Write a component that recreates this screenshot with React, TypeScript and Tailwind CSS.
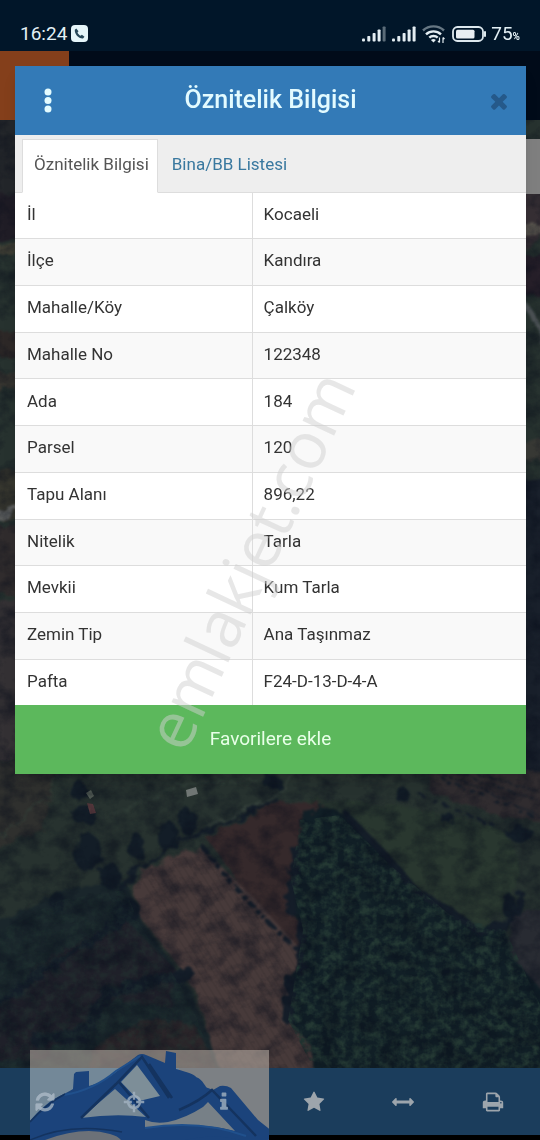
import { useState } from "react";

const attributes = [
  { label: "İl", value: "Kocaeli" },
  { label: "İlçe", value: "Kandıra" },
  { label: "Mahalle/Köy", value: "Çalköy" },
  { label: "Mahalle No", value: "122348" },
  { label: "Ada", value: "184" },
  { label: "Parsel", value: "120" },
  { label: "Tapu Alanı", value: "896,22" },
  { label: "Nitelik", value: "Tarla" },
  { label: "Mevkii", value: "Kum Tarla" },
  { label: "Zemin Tip", value: "Ana Taşınmaz" },
  { label: "Pafta", value: "F24-D-13-D-4-A" },
];

const icons = {
  refresh:
    "M1639 1056q0 5-1 7-64 268-268 434.5t-478 166.5q-146 0-282.5-55t-243.5-157l-129 129q-19 19-45 19t-45-19-19-45v-448q0-26 19-45t45-19h448q26 0 45 19t19 45-19 45l-137 137q71 66 161 102t187 36q134 0 250-65t186-179q11-17 53-117 8-23 30-23h192q13 0 22.5 9.5t9.5 22.5zm25-800v448q0 26-19 45t-45 19h-448q-26 0-45-19t-19-45 19-45l138-138q-148-137-349-137-134 0-250 65t-186 179q-11 17-53 117-8 23-30 23h-199q-13 0-22.5-9.5t-9.5-22.5v-7q65-268 270-434.5t480-166.5q146 0 284 55.5t245 156.5l130-129q19-19 45-19t45 19 19 45z",
  locate:
    "M800 64h192v260a580 580 0 0 1 476 476h260v192h-260a580 580 0 0 1-476 476v260h-192v-260a580 580 0 0 1-476-476h-260v-192h260a580 580 0 0 1 476-476zM800 520a390 390 0 0 0-280 280h200v192h-200a390 390 0 0 0 280 280v-200h192v200a390 390 0 0 0 280-280h-200v-192h200a390 390 0 0 0-280-280v200h-192z",
  info: "M1216 1344v128q0 26-19 45t-45 19h-512q-26 0-45-19t-19-45v-128q0-26 19-45t45-19h64v-384h-64q-26 0-45-19t-19-45v-128q0-26 19-45t45-19h384q26 0 45 19t19 45v576h64q26 0 45 19t19 45zm-128-1152v192q0 26-19 45t-45 19h-256q-26 0-45-19t-19-45v-192q0-26 19-45t45-19h256q26 0 45 19t19 45z",
  star: "M1728 647q0 22-26 48l-363 354 86 500q1 7 1 20 0 21-10.5 35.5t-30.5 14.5q-19 0-40-12l-449-236-449 236q-22 12-40 12-21 0-31.5-14.5t-10.5-35.5q0-6 2-20l86-500-364-354q-25-27-25-48 0-37 56-46l502-73 225-455q19-41 49-41t49 41l225 455 502 73q56 9 56 46z",
  measure:
    "M1792 896q0 26-19 45l-256 256q-19 19-45 19t-45-19-19-45v-128h-1024v128q0 26-19 45t-45 19-45-19l-256-256q-19-19-19-45t19-45l256-256q19-19 45-19t45 19 19 45v128h1024v-128q0-26 19-45t45-19 45 19l256 256q19 19 19 45z",
  print:
    "M448 1536h896v-256h-896v256zm0-640h896v-384h-160q-40 0-68-28t-28-68v-160h-640v640zm1152 64q0-26-19-45t-45-19-45 19-19 45 19 45 45 19 45-19 19-45zm128 0v416q0 13-9.5 22.5t-22.5 9.5h-224v160q0 40-28 68t-68 28h-960q-40 0-68-28t-28-68v-160h-224q-13 0-22.5-9.5t-9.5-22.5v-416q0-79 56.5-135.5t135.5-56.5h64v-544q0-40 28-68t68-28h672q40 0 88 20t76 48l152 152q28 28 48 76t20 88v256h64q79 0 135.5 56.5t56.5 135.5z",
  close:
    "M1490 1322q0 40-28 68l-136 136q-28 28-68 28t-68-28l-294-294-294 294q-28 28-68 28t-68-28l-136-136q-28-28-28-68t28-68l294-294-294-294q-28-28-28-68t28-68l136-136q28-28 68-28t68 28l294 294 294-294q28-28 68-28t68 28l136 136q28 28 28 68t-28 68l-294 294 294 294q28 28 28 68z",
};

const tools: { name: string; icon: keyof typeof icons }[] = [
  { name: "Yenile", icon: "refresh" },
  { name: "Konum", icon: "locate" },
  { name: "Bilgi", icon: "info" },
  { name: "Favoriler", icon: "star" },
  { name: "Ölçüm", icon: "measure" },
  { name: "Yazdır", icon: "print" },
];

function Icon({ name, className }: { name: keyof typeof icons; className?: string }) {
  return (
    <svg viewBox="0 0 1792 1792" fill="currentColor" fillRule="evenodd" aria-hidden="true" className={className}>
      <path d={icons[name]} />
    </svg>
  );
}

function Signal({ full }: { full?: boolean }) {
  return (
    <svg viewBox="0 0 24 16" fill="#e3edf2" aria-hidden="true" className="h-4 w-6">
      <rect x="0" y="12.500" width="3" height="3" rx="1" />
      <rect x="5.300" y="10" width="3" height="5.500" rx="0.800" />
      <rect x="10.600" y="7" width="3" height="8.500" rx="0.800" />
      <rect x="15.600" y="3.500" width="3" height="12" rx="0.800" />
      <rect x="20.600" y="0.500" width="3" height="15" rx="0.800" opacity={full ? 1 : 0.4} />
    </svg>
  );
}

function StatusBar() {
  return (
    <header className="flex h-[51px] items-center justify-between bg-[#011629] pt-4 pr-5 pl-5 text-[#e3f0f5]">
      <div className="flex items-center gap-1">
        <span className="text-[19px] leading-none">16:24</span>
        <svg viewBox="0 0 17 17" aria-hidden="true" className="size-[17px]">
          <rect width="17" height="17" rx="4" fill="#e6f6fa" />
          <path
            d="M5.300 3.500 3.800 4.800C3.300 9 7.600 13.800 12 13.500l1.500-1.700-2.600-2-1.400 1C8.200 10.200 6.900 8.900 6.500 7.600l1-1.300z"
            fill="#27485a"
          />
        </svg>
      </div>
      <div className="flex items-center gap-1.5">
        <Signal />
        <Signal full />
        <svg viewBox="0 0 24 18" fill="none" stroke="#e3edf2" strokeWidth="2.400" aria-hidden="true" className="h-[18px] w-6">
          <path d="M1 5.500a15.500 15.500 0 0 1 21 0" opacity="0.450" />
          <path d="M4 9.300a11 11 0 0 1 15 0" />
          <path d="M7.300 12.700a6 6 0 0 1 8.400 0" />
          <path d="m11.500 17.500-2.600-2.600q2.600-2 5 0z" fill="#e3edf2" stroke="none" />
          <path d="M17.500 12.500v5M16 16l1.500 1.500M21 18v-5.500M22.500 14 21 12.500" strokeWidth="1.200" />
        </svg>
        <div className="flex items-center gap-1">
          <svg viewBox="0 0 35 16" aria-hidden="true" className="h-4 w-[35px]">
            <rect x="1" y="1" width="30" height="14" rx="4.500" fill="none" stroke="#dde8ee" strokeWidth="1.800" />
            <rect x="4" y="3.700" width="18.500" height="8.800" rx="1.500" fill="#e8eef2" />
            <path d="M33 6v4" stroke="#dde8ee" strokeWidth="2" strokeLinecap="round" />
          </svg>
          <span className="text-[19px] leading-none">
            75<span className="text-[10px] font-bold">%</span>
          </span>
        </div>
      </div>
    </header>
  );
}

function SatelliteMap() {
  return (
    <svg
      viewBox="0 0 540 1140"
      preserveAspectRatio="xMidYMid slice"
      colorInterpolationFilters="sRGB"
      aria-hidden="true"
      className="absolute inset-0 -z-10 h-full w-full"
    >
      <defs>
        <filter id="grain" x="0" y="0" width="100%" height="100%">
          <feTurbulence type="fractalNoise" baseFrequency="0.050 0.060" numOctaves="5" seed="8" />
          <feColorMatrix values="0 0 0 0 0.030  0 0 0 0 0.050  0 0 0 0 0.100  2.200 0 0 0 -0.850" />
        </filter>
        <filter id="canopy" x="0" y="0" width="100%" height="100%">
          <feTurbulence type="fractalNoise" baseFrequency="0.130" numOctaves="3" seed="3" />
          <feColorMatrix values="0 0 0 0 0.140  0 0 0 0 0.220  0 0 0 0 0.200  0 2.600 0 0 -0.950" />
          <feComposite in2="SourceGraphic" operator="in" />
          <feGaussianBlur stdDeviation="0.600" />
        </filter>
        <filter id="rough" x="-5%" y="-5%" width="110%" height="110%">
          <feTurbulence type="fractalNoise" baseFrequency="0.080" numOctaves="3" seed="5" />
          <feDisplacementMap in="SourceGraphic" scale="12" />
          <feGaussianBlur stdDeviation="0.900" />
        </filter>
        <pattern id="furrows" width="6" height="6" patternUnits="userSpaceOnUse" patternTransform="rotate(-32)">
          <path d="M2 0v6" stroke="#2c2528" strokeWidth="1.500" opacity="0.220" />
        </pattern>
      </defs>
      <rect width="540" height="1140" fill="#27322f" />

      {/* strips beside the dialog */}
      <g filter="url(#rough)">
        <path d="M-9 110h32v70l-12 60H-9z" fill="#23262a" />
        <path d="M-9 195h34v45H-9z" fill="#201d26" />
        <path d="M-9 245h34v7H-9z" fill="#454438" />
        <path d="M-9 333h34v25H-9z" fill="#2d2827" />
        <path d="M-9 372h34v17H-9z" fill="#3b3932" />
        <path d="M-9 470h34v48H-9z" fill="#36362e" />
        <path d="M-9 525h34v70H-9z" fill="#302c2d" />
        <path d="m-9 517 34-14" stroke="#5b5d5d" strokeWidth="7" />
        <path d="M518 190h32v40l-25 20z" fill="#362f34" />
        <path d="M520 225h30v10h-30z" fill="#56524c" />
        <path d="M520 255h30v40h-30z" fill="#261f29" />
        <path d="M520 300q20 20 28 50" stroke="#4b5154" strokeWidth="6" fill="none" />
        <path d="M518 440h32v20h-32z" fill="#383935" />
        <path d="M518 480h32v310h-32z" fill="#19202b" />
        <path d="M-9 600h34v160H-9z" fill="#343134" />
      </g>

      <g filter="url(#rough)">
        <path d="M-9 760h70L42 830-9 850z" fill="#2f302e" />
        <path d="M430 770h130v55l-60-8-70-25z" fill="#302c2f" />
        <path d="M303 800q90-3 205 32l12 35-8 35-32 28-42-12-70-75-50-35z" fill="#29372f" />
        <path d="m512 910 38 0v105l-50-40z" fill="#282b32" />
        <path d="M-9 925 60 890l65-10 20 45 45 65 35 85H-9z" fill="#1a262b" />
        <path d="m-9 1010 70-60 65-30 50 50-5 35-60-5-50 45-30 15H-9z" fill="#1f2029" />
        <path d="m100 1040 50-20 45 5 20 40-5 20H85z" fill="#2a2529" />
        <path
          d="m300 815 20-9 23 6 47 48 25 32 25 13 30 20h30l15 35 40 45v75H318l-8-35-24-27v-41l17-25 2-24-18-20 9-52z"
          fill="#111f26"
        />
        <path d="m207 838 68-36 48 2-22 13-5 39-9 52 18 20-2 23-50-48z" fill="#35292b" />
        <path
          d="m131 884 15-14 40-20 17-1 50 48 50 55-3 18-14 7v41l24 27 8 40H225l-10-30-19-61-14-24-41-52z"
          fill="#473a3a"
        />
      </g>
      <path d="m140 880 45-25 20 2 95 97-3 16-14 8v40l24 27 6 35h-85l-34-115z" fill="url(#furrows)" />

      <g filter="url(#rough)" fill="none" stroke="#141d28" strokeLinecap="round">
        <path d="m120 890 15-18 25-15 20-18 25-5 40-20 32-13" strokeWidth="4" />
        <path d="m205 850 30 37 25 27 22 22 20 17" strokeWidth="5" strokeDasharray="2 8" />
        <path d="m343 812 47 48 27 32 35 20 30 22 28-14 12-25" strokeWidth="7" />
        <path d="m445 780 55 22 40 18M420 795l48 20 45 20" strokeWidth="3" strokeDasharray="4 9" />
        <path d="m440 774 26 8 74 34M455 772l85 29M475 772l65 20" strokeWidth="1.500" strokeDasharray="2 3" />
        <path d="M-5 1005 60 960l40-25 30-20" strokeWidth="7" />
        <path d="m35 1040 50-5 20-40 50-15 35-5" strokeWidth="12" />
        <path d="m290 980-1 40M302 925l-1 45M297 850l-7 60" strokeWidth="10" />
        <path d="m0 835 50-38 10-30M100 820l80-35 80-5" stroke="#33413a" strokeWidth="1.500" />
        <path d="m303 770-35 30-60 25" stroke="#3b4740" strokeWidth="2" />
      </g>
      <g filter="url(#rough)" fill="#131d27">
        <ellipse cx="78" cy="790" rx="9" ry="9" />
        <ellipse cx="84" cy="815" rx="12" ry="9" />
        <ellipse cx="88" cy="853" rx="14" ry="19" />
        <ellipse cx="135" cy="845" rx="9" ry="12" />
        <ellipse cx="168" cy="836" rx="10" ry="15" />
        <ellipse cx="188" cy="822" rx="9" ry="13" />
        <ellipse cx="110" cy="876" rx="10" ry="14" />
        <ellipse cx="57" cy="902" rx="8" ry="11" />
        <ellipse cx="125" cy="910" rx="15" ry="12" />
        <ellipse cx="272" cy="782" rx="10" ry="7" />
        <ellipse cx="402" cy="795" rx="7" ry="8" />
        <ellipse cx="447" cy="818" rx="7" ry="6" />
        <ellipse cx="520" cy="834" rx="14" ry="8" />
        <ellipse cx="508" cy="905" rx="7" ry="12" />
      </g>
      <path d="m186 790 10-3 2 7-11 3z" fill="#717775" />
      <path d="m86 793 5-3 3 6-4 3z" fill="#6b7568" />
      <path d="m87 803 6 1 3 9-6 1z" fill="#54373b" />
      <g filter="url(#canopy)">
        <path d="m300 820 40-5 50 50 60 50 55 15 35 75v75H320l-32-60 15-90-12-50z" />
        <path d="M0 930 60 900l65-10 15 35 50 75 25 68H0z" opacity="0.400" />
      </g>
      <rect width="540" height="1140" filter="url(#grain)" opacity="0.500" />
    </svg>
  );
}

function HouseLogo() {
  return (
    <svg viewBox="0 0 239 90" role="img" aria-label="Logo" className="absolute bottom-0 left-[30px] h-[90px] w-[239px]">
      <rect width="239" height="90" fill="#b9aea6" opacity="0.580" />
      <path d="M0 18h149v67H0z" fill="#6ca0c4" opacity="0.300" />
      <path d="M149 18h90v67h-90z" fill="#8c8580" opacity="0.300" />
      <path
        d="M0 71C8 61 21 49 34 44q6-3 9-5l1-15 2-2 13-1v15q12-3 23-11L108 5q4-2 8 0l19 8 1-12 10 2v16q19 5 20 8c8 3 9 11 12 11l5 2 7-4q6-1 11 2l27 32 20 16-10 4H0z"
        fill="#1b437b"
      />
      <path d="M51 68 85 39l31 28q-30-4-65 1z" fill="#778894" />
      <path d="m91 32 16-17 23 31-21 5z" fill="#7d8e98" />
      <path d="M115 78v-8q10 4 23 2 18-4 35-15l5-5 27 29q-40-10-90-3z" fill="#778087" />
      <path d="M15 90q38-14 65-6 8 2 11 6z" fill="#6c7178" />
      <path d="M155 90q30-7 55 0z" fill="#1b437b" />
      <path d="M51 68 86 34 112 7l27 41M89 32l30 36M119 14l23 34M149 60q21-9 33-20l44 46" fill="none" stroke="#14335f" strokeWidth="2.500" />
      <path d="M34 45q30-5 52-24l24-15M115 78q55-9 101 8" fill="none" stroke="#20508c" strokeWidth="2" />
      <path d="M0 72q16-18 35-28M0 90q40-18 92-8" fill="none" stroke="#14335f" strokeWidth="1.500" />
    </svg>
  );
}

function AttributeDialog() {
  const [tab, setTab] = useState(0);

  return (
    <section role="dialog" aria-labelledby="dialog-title" className="relative shadow-lg">
      <div className="flex h-[69px] items-center justify-between bg-[#337ab7] px-[9px] text-[#e3fbff]">
        <button aria-label="Menü" className="flex h-9 w-12 items-center justify-center">
          <svg viewBox="0 0 8 26" fill="currentColor" aria-hidden="true" className="h-[26px] w-2">
            <circle cx="4" cy="4" r="3.500" />
            <circle cx="4" cy="12.500" r="3.500" />
            <circle cx="4" cy="21" r="3.500" />
          </svg>
        </button>
        <h1 id="dialog-title" className="pb-0.5 text-[25px] leading-8 font-medium">
          Öznitelik Bilgisi
        </h1>
        <button aria-label="Kapat" className="flex h-9 w-12 items-center justify-end pr-1.5 text-[#25598a]">
          <Icon name="close" className="size-6" />
        </button>
      </div>

      <div role="tablist" className="flex h-[58px] items-end gap-0.5 border-b border-[#dddddd] bg-[#eeeeee] px-[7px] text-[17px]">
        {["Öznitelik Bilgisi", "Bina/BB Listesi"].map((name, index) => (
          <button
            key={name}
            role="tab"
            aria-selected={tab === index}
            onClick={() => setTab(index)}
            className={`-mb-px h-[54px] border pr-2 pb-0.5 pl-[11px] ${
              tab === index
                ? "border-[#dddddd] border-b-white bg-white text-[#555555]"
                : "border-transparent text-[#39789f]"
            }`}
          >
            {name}
          </button>
        ))}
      </div>

      <table className="h-[512px] w-full table-fixed border-collapse bg-white text-left text-[17px] text-[#333333]">
        <tbody>
          {attributes.map((item) => (
            <tr key={item.label} className="border-b border-[#dddddd] last:border-b-0 even:bg-[#f9f9f9]">
              <th scope="row" className="w-[46.400%] border-r border-[#dddddd] px-3 pb-0.5 font-normal">
                {item.label}
              </th>
              <td className="px-[11px] pb-0.5">{item.value}</td>
            </tr>
          ))}
        </tbody>
      </table>

      <button className="h-[69px] w-full bg-[#5cb85c] text-[19px] text-[#e8ffe8]">Favorilere ekle</button>
    </section>
  );
}

export default function App() {
  return (
    <div className="relative isolate grid min-h-screen overflow-hidden bg-black font-[Roboto,sans-serif]">
      <SatelliteMap />

      <div className="flex flex-col [grid-area:1/1]">
        <StatusBar />
        <div className="flex h-[69px] bg-[#010b19]">
          <button aria-label="Ana menü" className="w-[69px] bg-[#843f1b]" />
        </div>
        <button aria-label="Katmanlar" className="mt-[19px] h-[55px] w-[69px] self-end bg-[#7f7f7f]" />

        <footer className="relative mt-auto border-b-[5px] border-black">
          <nav className="grid h-[67px] grid-cols-6 bg-[#1b3d5c] pr-0.5 text-[#9da5ac]">
            {tools.map((tool) => (
              <button key={tool.name} aria-label={tool.name} className="flex items-center justify-center">
                <Icon name={tool.icon} className="size-[22px]" />
              </button>
            ))}
          </nav>
        </footer>
      </div>

      <main className="pt-[66px] pr-[14px] pb-20 pl-[15px] [grid-area:1/1]">
        <AttributeDialog />
      </main>

      <HouseLogo />
      {/* toolbar icons stay visible through the logo */}
      <div
        className="pointer-events-none absolute inset-x-0 bottom-0 grid h-[72px] grid-cols-6 pr-0.5 pb-[5px] text-[#a3b3c2]"
        aria-hidden="true"
      >
        {tools.slice(0, 3).map((tool) => (
          <span key={tool.name} className="flex items-center justify-center">
            <Icon name={tool.icon} className="size-[22px] opacity-80" />
          </span>
        ))}
      </div>

      {/* watermark */}
      <span className="pointer-events-none absolute top-[560px] left-[249px] -translate-1/2 rotate-[-65deg] font-['Open_Sans',sans-serif] text-[65px] leading-none text-[#d0d0d0]/50">
        emlakjet.com
      </span>
    </div>
  );
}
